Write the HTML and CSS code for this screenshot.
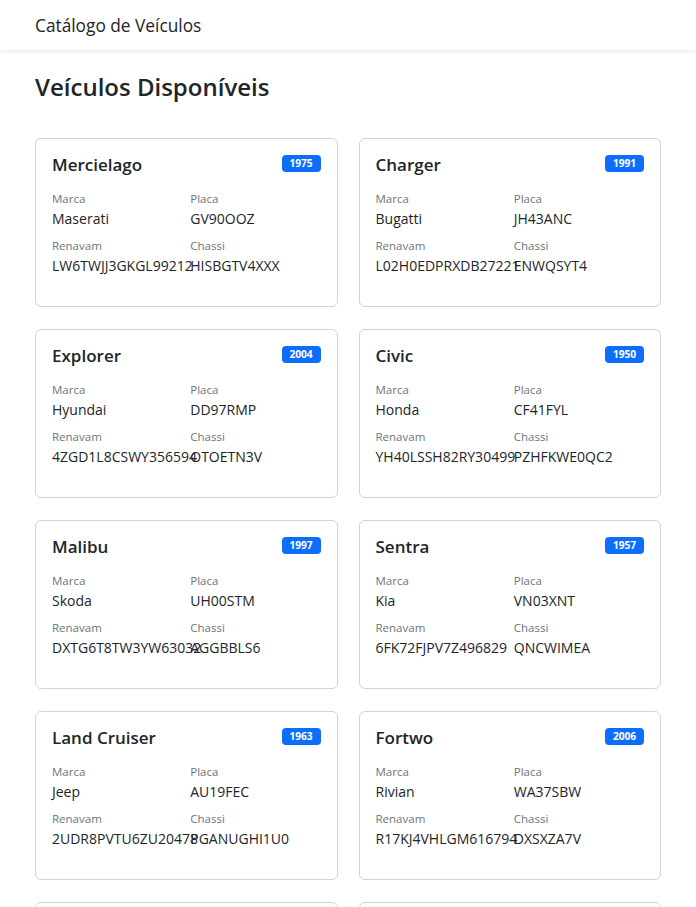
FILE: index.html
```html
<!DOCTYPE html>
<html lang="pt-BR">
<head>
<meta charset="utf-8">
<title>Catálogo de Veículos</title>
<link rel="stylesheet" href="styles.css">
</head>
<body>
<nav class="navbar">
  <span class="brand">Catálogo de Veículos</span>
</nav>
<main class="container">
  <h2 class="page-title">Veículos Disponíveis</h2>
  <div class="grid">
    <div class="card">
      <div class="card-head"><h5 class="card-title">Mercielago</h5><span class="badge">1975</span></div>
      <div class="fields">
        <div class="field"><span class="label">Marca</span><span class="value">Maserati</span></div>
        <div class="field"><span class="label">Placa</span><span class="value">GV90OOZ</span></div>
        <div class="field"><span class="label">Renavam</span><span class="value">LW6TWJJ3GKGL99212</span></div>
        <div class="field"><span class="label">Chassi</span><span class="value">HISBGTV4XXX</span></div>
      </div>
    </div>
    <div class="card">
      <div class="card-head"><h5 class="card-title">Charger</h5><span class="badge">1991</span></div>
      <div class="fields">
        <div class="field"><span class="label">Marca</span><span class="value">Bugatti</span></div>
        <div class="field"><span class="label">Placa</span><span class="value">JH43ANC</span></div>
        <div class="field"><span class="label">Renavam</span><span class="value">L02H0EDPRXDB27221</span></div>
        <div class="field"><span class="label">Chassi</span><span class="value">ENWQSYT4</span></div>
      </div>
    </div>
    <div class="card">
      <div class="card-head"><h5 class="card-title">Explorer</h5><span class="badge">2004</span></div>
      <div class="fields">
        <div class="field"><span class="label">Marca</span><span class="value">Hyundai</span></div>
        <div class="field"><span class="label">Placa</span><span class="value">DD97RMP</span></div>
        <div class="field"><span class="label">Renavam</span><span class="value">4ZGD1L8CSWY356594</span></div>
        <div class="field"><span class="label">Chassi</span><span class="value">OTOETN3V</span></div>
      </div>
    </div>
    <div class="card">
      <div class="card-head"><h5 class="card-title">Civic</h5><span class="badge">1950</span></div>
      <div class="fields">
        <div class="field"><span class="label">Marca</span><span class="value">Honda</span></div>
        <div class="field"><span class="label">Placa</span><span class="value">CF41FYL</span></div>
        <div class="field"><span class="label">Renavam</span><span class="value">YH40LSSH82RY30499</span></div>
        <div class="field"><span class="label">Chassi</span><span class="value">PZHFKWE0QC2</span></div>
      </div>
    </div>
    <div class="card">
      <div class="card-head"><h5 class="card-title">Malibu</h5><span class="badge">1997</span></div>
      <div class="fields">
        <div class="field"><span class="label">Marca</span><span class="value">Skoda</span></div>
        <div class="field"><span class="label">Placa</span><span class="value">UH00STM</span></div>
        <div class="field"><span class="label">Renavam</span><span class="value">DXTG6T8TW3YW63032</span></div>
        <div class="field"><span class="label">Chassi</span><span class="value">AGGBBLS6</span></div>
      </div>
    </div>
    <div class="card">
      <div class="card-head"><h5 class="card-title">Sentra</h5><span class="badge">1957</span></div>
      <div class="fields">
        <div class="field"><span class="label">Marca</span><span class="value">Kia</span></div>
        <div class="field"><span class="label">Placa</span><span class="value">VN03XNT</span></div>
        <div class="field"><span class="label">Renavam</span><span class="value">6FK72FJPV7Z496829</span></div>
        <div class="field"><span class="label">Chassi</span><span class="value">QNCWIMEA</span></div>
      </div>
    </div>
    <div class="card">
      <div class="card-head"><h5 class="card-title">Land Cruiser</h5><span class="badge">1963</span></div>
      <div class="fields">
        <div class="field"><span class="label">Marca</span><span class="value">Jeep</span></div>
        <div class="field"><span class="label">Placa</span><span class="value">AU19FEC</span></div>
        <div class="field"><span class="label">Renavam</span><span class="value">2UDR8PVTU6ZU20478</span></div>
        <div class="field"><span class="label">Chassi</span><span class="value">PGANUGHI1U0</span></div>
      </div>
    </div>
    <div class="card">
      <div class="card-head"><h5 class="card-title">Fortwo</h5><span class="badge">2006</span></div>
      <div class="fields">
        <div class="field"><span class="label">Marca</span><span class="value">Rivian</span></div>
        <div class="field"><span class="label">Placa</span><span class="value">WA37SBW</span></div>
        <div class="field"><span class="label">Renavam</span><span class="value">R17KJ4VHLGM616794</span></div>
        <div class="field"><span class="label">Chassi</span><span class="value">DXSXZA7V</span></div>
      </div>
    </div>
    <div class="card">
      <div class="card-head"><h5 class="card-title">Corolla</h5><span class="badge">1988</span></div>
      <div class="fields">
        <div class="field"><span class="label">Marca</span><span class="value">Toyota</span></div>
        <div class="field"><span class="label">Placa</span><span class="value">KT52LMB</span></div>
        <div class="field"><span class="label">Renavam</span><span class="value">9HJ3KQ2LM7XP41820</span></div>
        <div class="field"><span class="label">Chassi</span><span class="value">TRWQ8ZK2</span></div>
      </div>
    </div>
    <div class="card">
      <div class="card-head"><h5 class="card-title">Golf</h5><span class="badge">2012</span></div>
      <div class="fields">
        <div class="field"><span class="label">Marca</span><span class="value">Volkswagen</span></div>
        <div class="field"><span class="label">Placa</span><span class="value">MQ28HZT</span></div>
        <div class="field"><span class="label">Renavam</span><span class="value">Z8PK1WR5TN3C70215</span></div>
        <div class="field"><span class="label">Chassi</span><span class="value">BLX4UVE9</span></div>
      </div>
    </div>
  </div>
</main>
</body>
</html>
```
FILE: styles.css
```css
* { box-sizing: border-box; }

html, body {
  margin: 0;
  padding: 0;
  background: #fff;
}

body {
  font-family: "Open Sans", "Noto Sans", sans-serif;
  color: #212529;
}

.navbar {
  background: #fff;
  padding: 12px 35px 11px;
  box-shadow: 0 2px 4px rgba(0, 0, 0, 0.075);
  position: relative;
  z-index: 1;
}

.brand {
  display: block;
  font-size: 17.3px;
  line-height: 27px;
  color: #212529;
}

.container {
  padding: 23px 35px 20px;
}

.page-title {
  margin: 0 0 36px;
  font-size: 24px;
  line-height: 28.8px;
  font-weight: 600;
}

.grid {
  display: grid;
  grid-template-columns: 1fr 1fr;
  column-gap: 21px;
  row-gap: 22px;
}

.card {
  border: 1px solid #d2d2d2;
  border-radius: 6px;
  padding: 16px 16px 16px;
  min-width: 0;
}

.card-head {
  display: flex;
  justify-content: space-between;
  align-items: flex-start;
  margin-bottom: 15px;
}

.card-title {
  margin: 0;
  font-size: 17px;
  line-height: 20px;
  font-weight: 600;
}

.badge {
  background: #0d6efd;
  color: #fff;
  font-size: 10.2px;
  line-height: 1;
  font-weight: 700;
  padding: 3.7px 7.8px;
  border-radius: 4px;
}

.fields {
  display: grid;
  grid-template-columns: 1fr 1fr;
  column-gap: 8px;
  row-gap: 8px;
  margin-bottom: 14px;
}

.field {
  display: flex;
  flex-direction: column;
  min-width: 0;
}

.label {
  font-size: 11.5px;
  line-height: 18px;
  color: #6c757d;
}

.value {
  font-size: 14px;
  line-height: 21px;
  white-space: nowrap;
}
```
